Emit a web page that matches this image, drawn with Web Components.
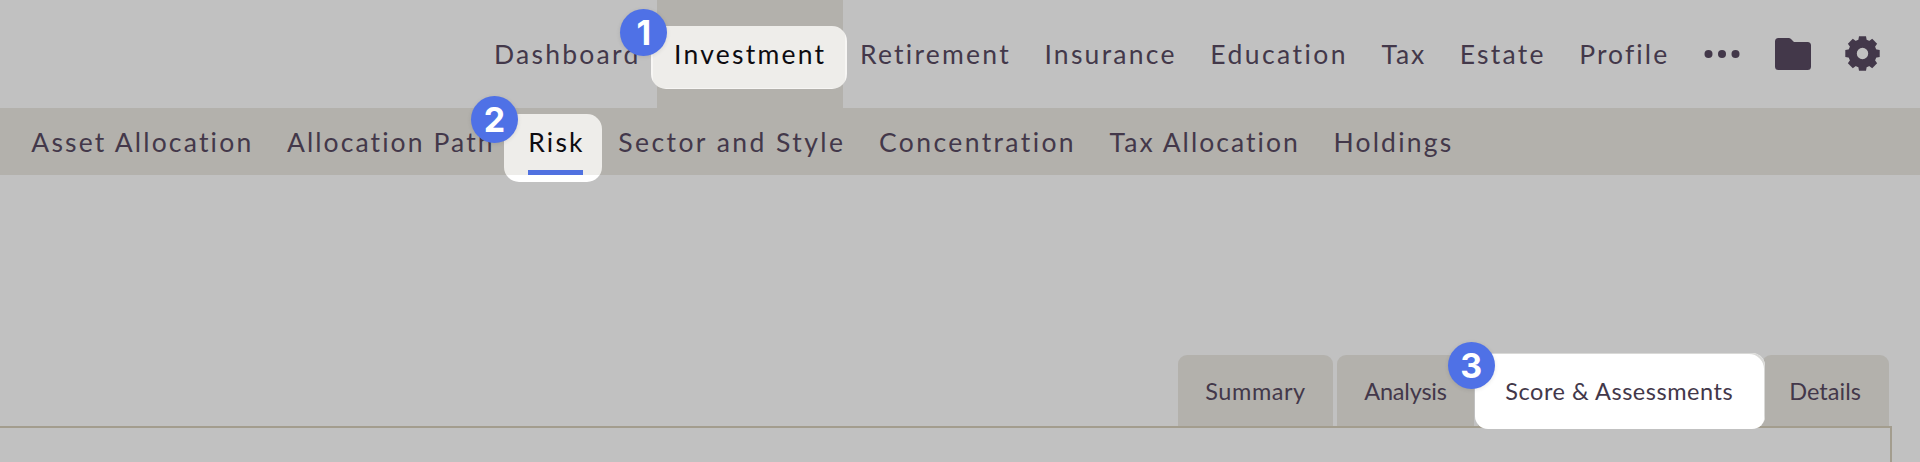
<!DOCTYPE html>
<html><head><meta charset="utf-8">
<style>
html,body{margin:0;height:100%;overflow:hidden;background:#c1c1c1;}
body{font-family:Lato,"Liberation Sans",sans-serif;color:#43384a;display:flex;flex-direction:column;}
</style></head>
<body>
<top-nav>
  <nav-item>Dashboard</nav-item>
  <nav-item active step="1">Investment</nav-item>
  <nav-item>Retirement</nav-item>
  <nav-item>Insurance</nav-item>
  <nav-item style="letter-spacing:2.45px">Education</nav-item>
  <nav-item style="letter-spacing:1.9px">Tax</nav-item>
  <nav-item>Estate</nav-item>
  <nav-item style="letter-spacing:2.1px">Profile</nav-item>
  <nav-tools slot="tools"></nav-tools>
</top-nav>
<sub-nav>
  <sub-item>Asset Allocation</sub-item>
  <sub-item style="letter-spacing:2.1px">Allocation Path</sub-item>
  <sub-item active step="2">Risk</sub-item>
  <sub-item style="letter-spacing:2.45px">Sector and Style</sub-item>
  <sub-item style="letter-spacing:2.4px">Concentration</sub-item>
  <sub-item style="letter-spacing:2.05px">Tax Allocation</sub-item>
  <sub-item>Holdings</sub-item>
</sub-nav>
<tab-bar>
  <tab-item style="letter-spacing:.55px">Summary</tab-item>
  <tab-item style="letter-spacing:-.2px">Analysis</tab-item>
  <tab-item active step="3" style="letter-spacing:.53px">Score &amp; Assessments</tab-item>
  <tab-item style="letter-spacing:.05px">Details</tab-item>
</tab-bar>
<content-panel></content-panel>
<script>
function def(name, css, html){
  customElements.define(name, class extends HTMLElement{
    constructor(){super();this.attachShadow({mode:'open'}).innerHTML='<style>'+css+'</style>'+html;}
    connectedCallback(){
      const s=this.getAttribute('step');
      const b=this.shadowRoot.querySelector('step-badge');
      if(s&&b){b.textContent=s;}
    }
  });
}
def('step-badge',`:host{display:flex;align-items:center;justify-content:center;position:absolute;width:47px;height:47px;border-radius:50%;background:#4f71e6;color:#fff;font:700 34px/1 Inter,"Liberation Sans",sans-serif;letter-spacing:0;z-index:5;box-shadow:0 1px 4px rgba(0,0,0,.1);}`,'<slot></slot>');
def('top-nav',`:host{display:flex;height:108px;flex:none;justify-content:flex-end;padding-right:40px;box-sizing:border-box;}
 .items{display:flex;height:100%;} `,'<div class="items"><slot></slot></div><slot name="tools"></slot>');
def('nav-item',`:host{display:flex;align-items:center;position:relative;padding:0 16.75px 1px;font-size:26.5px;letter-spacing:2.25px;height:108px;box-sizing:border-box;white-space:nowrap;}
 :host([active]){background:#b3b1ac;color:#0d0b10;}
 .hl{display:none;position:absolute;left:-6px;right:-4px;top:26px;height:63px;border-radius:15px;background:linear-gradient(#eeedea,#eeedea) 2px 0/calc(100% - 4px) calc(100% - 1px) no-repeat,#f7f6f4;}
 :host([active]) .hl{display:block;}
 .t{position:relative;z-index:2;}
 step-badge{display:none;left:-37px;top:9px;}
 :host([active]) step-badge{display:flex;}`,'<div class="hl"></div><span class="t"><slot></slot></span><step-badge></step-badge>');
def('nav-tools',`:host{display:flex;align-items:center;height:108px;padding-left:18px;gap:35px;color:#43384a;box-sizing:border-box;}
 svg{display:block;fill:currentColor;} `,`
 <svg width="36" height="10" viewBox="0 0 36 10" style="margin-top:-1px"><circle cx="4.5" cy="5" r="4"/><circle cx="18" cy="5" r="4"/><circle cx="31.5" cy="5" r="4"/></svg>
 <svg width="36" height="32" viewBox="0 0 36 32"><path d="M3.5 0H13.6Q15 0 16 1L19 4H32.5Q36 4 36 7.5V28.5Q36 32 32.5 32H3.5Q0 32 0 28.5V3.5Q0 0 3.5 0Z"/></svg>
 <svg width="35" height="35" viewBox="0 0 35 35" style="margin-left:-1px;margin-top:-1px"><circle cx="17.5" cy="17.5" r="10" fill="none" stroke="currentColor" stroke-width="8.6"/>
 <path d="M14 0.3H21L22 6H13Z"/>
 <path d="M14 0.3H21L22 6H13Z" transform="rotate(45 17.5 17.5)"/>
 <path d="M14 0.3H21L22 6H13Z" transform="rotate(90 17.5 17.5)"/>
 <path d="M14 0.3H21L22 6H13Z" transform="rotate(135 17.5 17.5)"/>
 <path d="M14 0.3H21L22 6H13Z" transform="rotate(180 17.5 17.5)"/>
 <path d="M14 0.3H21L22 6H13Z" transform="rotate(225 17.5 17.5)"/>
 <path d="M14 0.3H21L22 6H13Z" transform="rotate(270 17.5 17.5)"/>
 <path d="M14 0.3H21L22 6H13Z" transform="rotate(315 17.5 17.5)"/></svg>`);
def('sub-nav',`:host{display:flex;height:67px;flex:none;background:#b3b1ac;padding-left:14px;box-sizing:border-box;}`,'<slot></slot>');
def('sub-item',`:host{display:flex;align-items:center;position:relative;padding:0 16.25px 0 17.25px;font-size:26.5px;letter-spacing:2.2px;white-space:nowrap;height:67px;box-sizing:border-box;}
 :host([active]){color:#0d0b10;}
 .hl{display:none;position:absolute;left:-7px;right:-1px;top:6px;height:68px;border-radius:15px;background:linear-gradient(#eeedea,#eeedea) 0 0/100% 61px no-repeat,#fff;}
 .u{display:none;position:absolute;left:17.5px;right:17.5px;top:62px;height:5px;background:#5071e0;z-index:2;}
 :host([active]) .hl,:host([active]) .u{display:block;}
 .t{position:relative;z-index:2;}
 step-badge{display:none;left:-40px;top:-12px;}
 :host([active]) step-badge{display:flex;}`,'<div class="hl"></div><div class="u"></div><span class="t"><slot></slot></span><step-badge></step-badge>');
def('tab-bar',`:host{display:flex;justify-content:flex-end;gap:3.5px;flex:1 1 auto;align-items:flex-end;padding-right:31.5px;box-sizing:border-box;min-height:0;}`,'<slot></slot>');
def('tab-item',`:host{display:flex;align-items:center;position:relative;height:71px;padding:0 27.5px;background:#b3b1ac;border-radius:9px 9px 0 0;font-size:23.5px;white-space:nowrap;box-sizing:border-box;letter-spacing:.4px;}
 :host([active]){padding-right:25px;z-index:1;}
 .hl{display:none;position:absolute;left:-3px;right:-7px;top:-2px;bottom:-3px;border-radius:13px;background:#fff;box-shadow:inset -3px 3px 0 -2px #d9d9d7;}
 :host([active]) .hl{display:block;}
 .t{position:relative;z-index:2;}
 step-badge{display:none;left:-30px;top:-13px;}
 :host([active]) step-badge{display:flex;}`,'<div class="hl"></div><span class="t"><slot></slot></span><step-badge></step-badge>');
def('content-panel',`:host{display:block;flex:none;height:36px;margin-right:28px;border-top:2px solid #a39d8e;border-right:2px solid #a39d8e;box-sizing:border-box;}`,'');
</script>
</body></html>
